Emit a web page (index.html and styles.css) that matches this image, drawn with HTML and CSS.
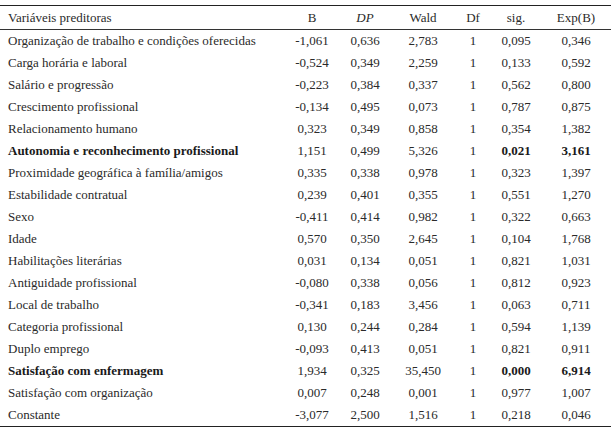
FILE: index.html
```html
<!DOCTYPE html>
<html lang="pt">
<head>
<meta charset="utf-8">
<link rel="stylesheet" href="styles.css">
</head>
<body>
<table class="tbl">
  <colgroup>
    <col class="c-var"><col class="c-b"><col class="c-dp"><col class="c-wald"><col class="c-df"><col class="c-sig"><col class="c-exp">
  </colgroup>
  <thead>
    <tr><th class="lbl">Variáveis preditoras</th><th>B</th><th><i>DP</i></th><th>Wald</th><th>Df</th><th>sig.</th><th>Exp(B)</th></tr>
  </thead>
  <tbody>
    <tr><td class="lbl">Organização de trabalho e condições oferecidas</td><td>-1,061</td><td>0,636</td><td>2,783</td><td>1</td><td>0,095</td><td>0,346</td></tr>
    <tr><td class="lbl">Carga horária e laboral</td><td>-0,524</td><td>0,349</td><td>2,259</td><td>1</td><td>0,133</td><td>0,592</td></tr>
    <tr><td class="lbl">Salário e progressão</td><td>-0,223</td><td>0,384</td><td>0,337</td><td>1</td><td>0,562</td><td>0,800</td></tr>
    <tr><td class="lbl">Crescimento profissional</td><td>-0,134</td><td>0,495</td><td>0,073</td><td>1</td><td>0,787</td><td>0,875</td></tr>
    <tr><td class="lbl">Relacionamento humano</td><td>0,323</td><td>0,349</td><td>0,858</td><td>1</td><td>0,354</td><td>1,382</td></tr>
    <tr><td class="lbl"><b>Autonomia e reconhecimento profissional</b></td><td>1,151</td><td>0,499</td><td>5,326</td><td>1</td><td><b>0,021</b></td><td><b>3,161</b></td></tr>
    <tr><td class="lbl">Proximidade geográfica à família/amigos</td><td>0,335</td><td>0,338</td><td>0,978</td><td>1</td><td>0,323</td><td>1,397</td></tr>
    <tr><td class="lbl">Estabilidade contratual</td><td>0,239</td><td>0,401</td><td>0,355</td><td>1</td><td>0,551</td><td>1,270</td></tr>
    <tr><td class="lbl">Sexo</td><td>-0,411</td><td>0,414</td><td>0,982</td><td>1</td><td>0,322</td><td>0,663</td></tr>
    <tr><td class="lbl">Idade</td><td>0,570</td><td>0,350</td><td>2,645</td><td>1</td><td>0,104</td><td>1,768</td></tr>
    <tr><td class="lbl">Habilitações literárias</td><td>0,031</td><td>0,134</td><td>0,051</td><td>1</td><td>0,821</td><td>1,031</td></tr>
    <tr><td class="lbl">Antiguidade profissional</td><td>-0,080</td><td>0,338</td><td>0,056</td><td>1</td><td>0,812</td><td>0,923</td></tr>
    <tr><td class="lbl">Local de trabalho</td><td>-0,341</td><td>0,183</td><td>3,456</td><td>1</td><td>0,063</td><td>0,711</td></tr>
    <tr><td class="lbl">Categoria profissional</td><td>0,130</td><td>0,244</td><td>0,284</td><td>1</td><td>0,594</td><td>1,139</td></tr>
    <tr><td class="lbl">Duplo emprego</td><td>-0,093</td><td>0,413</td><td>0,051</td><td>1</td><td>0,821</td><td>0,911</td></tr>
    <tr><td class="lbl"><b>Satisfação com enfermagem</b></td><td>1,934</td><td>0,325</td><td>35,450</td><td>1</td><td><b>0,000</b></td><td><b>6,914</b></td></tr>
    <tr><td class="lbl">Satisfação com organização</td><td>0,007</td><td>0,248</td><td>0,001</td><td>1</td><td>0,977</td><td>1,007</td></tr>
    <tr><td class="lbl">Constante</td><td>-3,077</td><td>2,500</td><td>1,516</td><td>1</td><td>0,218</td><td>0,046</td></tr>
  </tbody>
</table>
</body>
</html>
```
FILE: styles.css
```css
html, body {
  margin: 0;
  padding: 0;
  background: #ffffff;
}
body {
  padding-top: 5px;
  font-family: "Liberation Serif", "Tinos", "Times New Roman", "DejaVu Serif", serif;
  font-size: 13px;
  color: #2a2a2a;
}
.tbl {
  border-collapse: collapse;
  table-layout: fixed;
  width: 611px;
  font-family: "Liberation Serif", "Tinos", "Times New Roman", "DejaVu Serif", serif;
  font-size: 13px;
  border-top: 1.5px solid #222;
  border-bottom: 1.5px solid #222;
}
.c-var { width: 285px; }
.c-b { width: 54px; }
.c-dp { width: 52px; }
.c-wald { width: 64px; }
.c-df { width: 36px; }
.c-sig { width: 50px; }
.c-exp { width: 70px; }
.tbl th, .tbl td {
  padding: 0;
  text-align: center;
  font-weight: normal;
  white-space: nowrap;
}
.tbl th {
  height: 23px;
  border-bottom: 1px solid #333;
}
.tbl td {
  height: 22px;
}
.tbl .lbl {
  text-align: left;
  padding-left: 8px;
}
.tbl b {
  font-weight: bold;
  color: #1a1a1a;
}
```
